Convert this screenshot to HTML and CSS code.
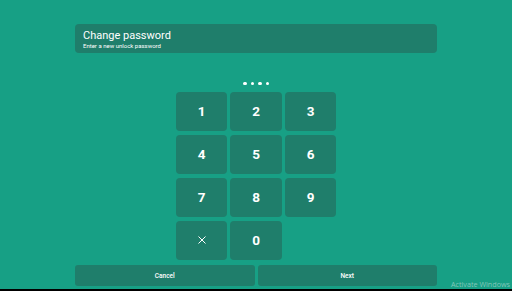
FILE: index.html
```html
<!DOCTYPE html>
<html lang="en">
<head>
  <meta charset="UTF-8">
  <meta name="viewport" content="width=device-width, initial-scale=1.0">
  <title>Change password</title>
  <link rel="stylesheet" href="styles.css">
</head>
<body>
  <div class="screen">
    <div class="header">
      <h1>Change password</h1>
      <p>Enter a new unlock password</p>
    </div>

    <div class="dots">
      <span></span><span></span><span></span><span></span>
    </div>

    <div class="keypad">
      <button class="key">1</button>
      <button class="key">2</button>
      <button class="key">3</button>
      <button class="key">4</button>
      <button class="key">5</button>
      <button class="key">6</button>
      <button class="key">7</button>
      <button class="key">8</button>
      <button class="key">9</button>
      <button class="key key-clear">
        <svg width="10" height="10" viewBox="0 0 10 10">
          <path d="M1.5 1.5 L8.5 8.5 M8.5 1.5 L1.5 8.5" stroke="#fff" stroke-width="1" fill="none"/>
        </svg>
      </button>
      <button class="key">0</button>
    </div>

    <div class="actions">
      <button class="btn">Cancel</button>
      <button class="btn">Next</button>
    </div>
  </div>

  <div class="watermark">Activate Windows</div>
</body>
</html>
```

FILE: styles.css
```css
html {
  background-color: #000;
}

body {
  margin: 0;
  height: 289px;
  background-color: #17a085;
  font-family: Roboto, "Noto Sans", sans-serif;
  overflow: hidden;
  position: relative;
}

.screen {
  width: 362px;
  margin: 0 auto;
  padding-top: 24px;
}

.header {
  background-color: #1f7e6b;
  border-radius: 4px;
  height: 29px;
  box-sizing: border-box;
  padding: 6px 8px 0;
  color: #fff;
}

.header h1 {
  margin: 0;
  font-size: 11px;
  font-weight: 400;
  line-height: 12px;
}

.header p {
  margin: 0;
  font-size: 6px;
  line-height: 7px;
}

.dots {
  display: flex;
  justify-content: center;
  gap: 4px;
  margin-top: 28.5px;
  height: 3.5px;
}

.dots span {
  width: 3.5px;
  height: 3.5px;
  border-radius: 50%;
  background-color: #fff;
}

.keypad {
  display: grid;
  grid-template-columns: repeat(3, 51.5px);
  grid-auto-rows: 39.5px;
  gap: 3.5px 3px;
  justify-content: center;
  margin-top: 6.5px;
}

.key {
  background-color: #1f7e6b;
  border: none;
  border-radius: 4px;
  color: #fff;
  font-family: Roboto, "Noto Sans", sans-serif;
  font-size: 13.5px;
  font-weight: 700;
  padding: 0;
  cursor: pointer;
  display: flex;
  align-items: center;
  justify-content: center;
}

.actions {
  display: flex;
  gap: 3px;
  margin-top: 5px;
}

.btn {
  flex: 1;
  height: 21px;
  background-color: #1f7e6b;
  border: none;
  border-radius: 3px;
  color: #fff;
  font-family: Roboto, "Noto Sans", sans-serif;
  font-size: 6.5px;
  font-weight: 500;
  padding: 0;
  cursor: pointer;
}

.watermark {
  position: absolute;
  left: 451px;
  top: 279px;
  font-family: "Open Sans", sans-serif;
  font-size: 7.2px;
  color: rgba(220, 230, 228, 0.55);
  white-space: nowrap;
}
```
